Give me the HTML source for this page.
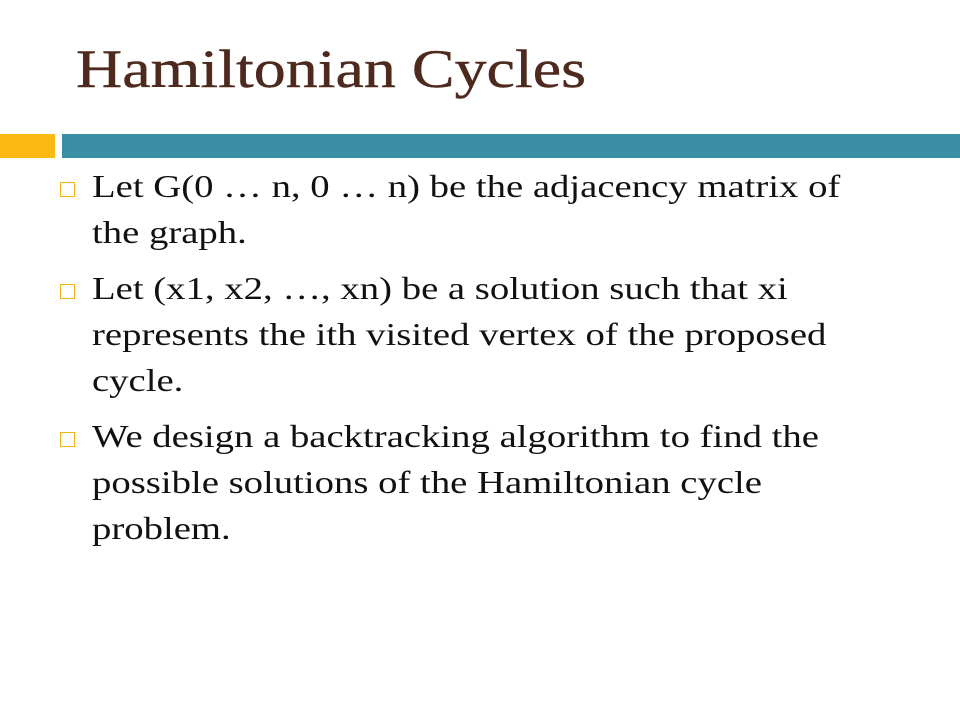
<!DOCTYPE html>
<html><head><style>
body{margin:0;width:960px;height:720px;background:#fff;position:relative;overflow:hidden;font-family:"Liberation Serif",serif;}
h1{position:absolute;left:76px;top:38px;margin:0;font-weight:normal;font-size:54px;color:#4e2a1e;transform:scaleX(1.185);transform-origin:0 0;white-space:nowrap;-webkit-text-stroke:0.4px #4e2a1e}
.o{position:absolute;left:0;top:134px;width:55px;height:24px;background:#fdb913}
.t{position:absolute;left:62px;top:134px;width:898px;height:24px;background:#3a8fa6}
.b{position:absolute;left:92px;font-size:32px;line-height:46px;color:#111;white-space:nowrap;transform:scaleX(1.21);transform-origin:0 0}
.sq{position:absolute;left:60px;width:13px;height:13px;border:1.5px solid #f4b312}
</style></head><body>
<h1>Hamiltonian Cycles</h1>
<div class="o"></div><div class="t"></div>
<span class="sq" style="top:182px"></span>
<span class="sq" style="top:284px"></span>
<span class="sq" style="top:432px"></span>
<div class="b" style="top:163px">Let G(0 … n, 0 … n) be the adjacency matrix of<br>the graph.</div>
<div class="b" style="top:265px">Let (x1, x2, …, xn) be a solution such that xi<br>represents the ith visited vertex of the proposed<br>cycle.</div>
<div class="b" style="top:413px">We design a backtracking algorithm to find the<br>possible solutions of the Hamiltonian cycle<br>problem.</div>
</body></html>
